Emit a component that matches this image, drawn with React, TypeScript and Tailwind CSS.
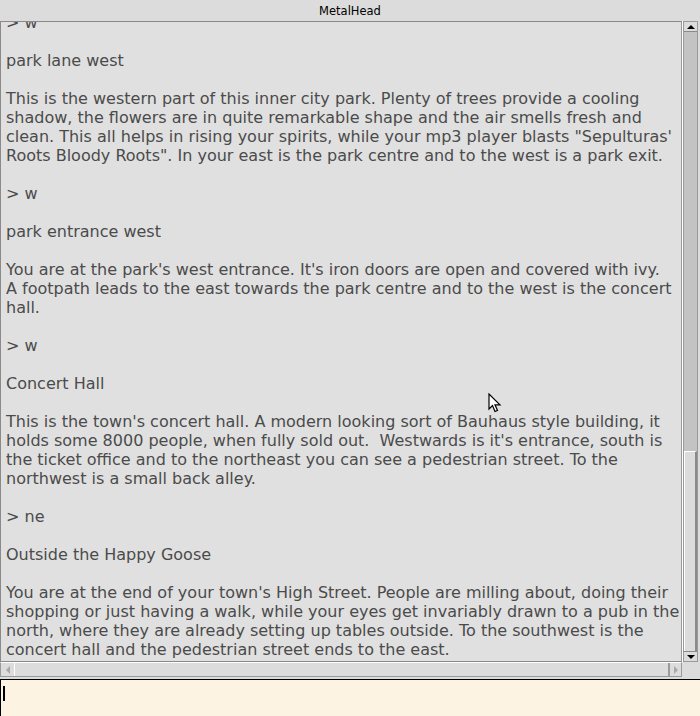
import React from "react";

const lines: string[] = [
  "> w",
  "",
  "park lane west",
  "",
  "This is the western part of this inner city park. Plenty of trees provide a cooling",
  "shadow, the flowers are in quite remarkable shape and the air smells fresh and",
  "clean. This all helps in rising your spirits, while your mp3 player blasts \"Sepulturas'",
  "Roots Bloody Roots\". In your east is the park centre and to the west is a park exit.",
  "",
  "> w",
  "",
  "park entrance west",
  "",
  "You are at the park's west entrance. It's iron doors are open and covered with ivy.",
  "A footpath leads to the east towards the park centre and to the west is the concert",
  "hall.",
  "",
  "> w",
  "",
  "Concert Hall",
  "",
  "This is the town's concert hall. A modern looking sort of Bauhaus style building, it",
  "holds some 8000 people, when fully sold out.  Westwards is it's entrance, south is",
  "the ticket office and to the northeast you can see a pedestrian street. To the",
  "northwest is a small back alley.",
  "",
  "> ne",
  "",
  "Outside the Happy Goose",
  "",
  "You are at the end of your town's High Street. People are milling about, doing their",
  "shopping or just having a walk, while your eyes get invariably drawn to a pub in the",
  "north, where they are already setting up tables outside. To the southwest is the",
  "concert hall and the pedestrian street ends to the east.",
];

function Tri({ dir, color }: { dir: "up" | "down" | "left" | "right"; color: string }) {
  const pts =
    dir === "up"
      ? "0,5 4,1 8,5"
      : dir === "down"
      ? "0,1 8,1 4,5"
      : dir === "left"
      ? "5,0 5,8 1,4"
      : "1,0 1,8 5,4";
  const w = dir === "up" || dir === "down" ? 8 : 6;
  const h = dir === "up" || dir === "down" ? 6 : 8;
  return (
    <svg width={w} height={h} viewBox={`0 0 ${w} ${h}`}>
      <polygon points={pts} fill={color} />
    </svg>
  );
}

export default function App() {
  return (
    <div
      className="relative w-[700px] h-[716px] bg-[#dcdcdc] flex flex-col overflow-hidden"
      style={{ fontFamily: '"DejaVu Sans", sans-serif' }}
    >
      {/* Title */}
      <div className="h-[21px] flex items-center justify-center pt-[2px] text-[11.5px] text-black">
        MetalHead
      </div>

      {/* Main area */}
      <div className="h-[641px] flex">
        <div className="w-[682px] h-full border border-[#8a8a8a] border-r-[#9a9a9a] bg-[#e0e0e0] overflow-hidden">
          <div className="mt-[-9px] pl-[5px] text-[16px] leading-[19px] text-[#4b4b4b] whitespace-pre">
            {lines.map((l, i) => (
              <div key={i} className="h-[19px]">
                {l}
              </div>
            ))}
          </div>
        </div>
        {/* vertical scrollbar */}
        <div className="w-[1px] bg-white" />
        <div className="w-[15px] h-full flex flex-col border border-[#9a9a9a] bg-[#c3c3c3]">
          <div className="h-[10px] bg-[#dcdcdc] border-b border-[#8a8a8a] flex items-center justify-center">
            <Tri dir="up" color="#000" />
          </div>
          <div className="flex-1 bg-[#c3c3c3]" />
          <div className="h-[200px] bg-[#dcdcdc] border-t border-l border-white border-r-[2px] border-r-[#8a8a8a]" />
          <div className="h-[10px] bg-[#dcdcdc] border-t border-[#8a8a8a] flex items-center justify-center">
            <Tri dir="down" color="#000" />
          </div>
        </div>
      </div>

      {/* horizontal scrollbar */}
      <div className="h-[15px] flex">
        <div className="w-[682px] h-full flex border border-[#9a9a9a] border-t-white bg-[#dcdcdc]">
          <div className="w-[13px] flex items-center justify-center">
            <Tri dir="left" color="#a8a8a8" />
          </div>
          <div className="flex-1 border-l border-white border-r-[2px] border-r-[#9a9a9a] bg-[#dcdcdc]" />
          <div className="w-[11px] flex items-center justify-center">
            <Tri dir="right" color="#a8a8a8" />
          </div>
        </div>
      </div>

      <div className="h-[2px]" />

      {/* input */}
      <div className="flex-1 border-t border-l border-black bg-[#fdf3e3] relative">
        <div className="absolute left-[2px] top-[6px] w-[2px] h-[15px] bg-black" />
      </div>

      {/* mouse pointer */}
      <svg
        className="absolute left-[488px] top-[393px]"
        width="14"
        height="21"
        viewBox="0 0 14 21"
      >
        <path
          d="M1 1 L1 16 L4.5 12.5 L7 18.5 L9.5 17.5 L7 11.8 L12 11.8 Z"
          fill="#fff"
          stroke="#000"
          strokeWidth="1.2"
          strokeLinejoin="miter"
        />
      </svg>
    </div>
  );
}
